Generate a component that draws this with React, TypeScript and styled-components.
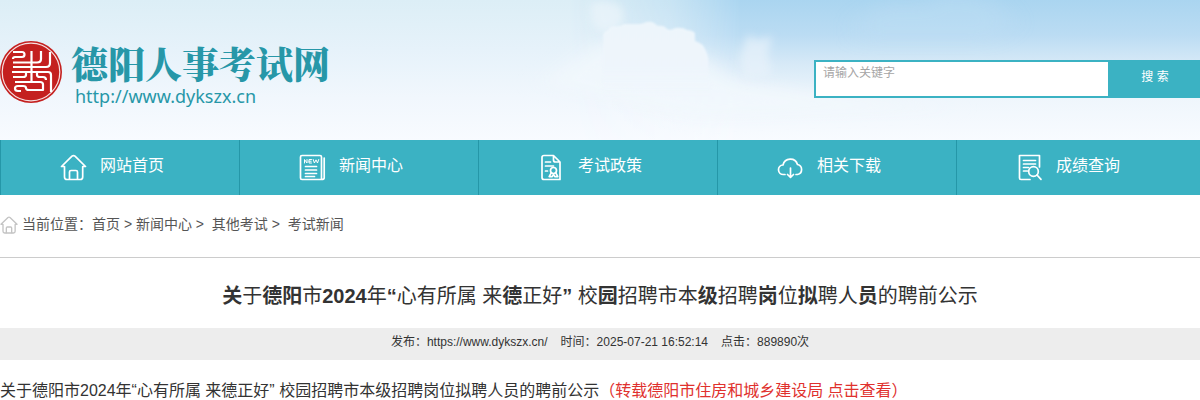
import React from 'react';
import styled, { createGlobalStyle } from 'styled-components';

const teal = '#3bb2c3';
const sans = '"Liberation Sans", "Noto Sans CJK SC", sans-serif';

const GlobalStyle = createGlobalStyle`
  * { box-sizing: border-box; }
  body { margin: 0; background: #fff; color: #333; font-family: ${sans}; }
  h1, p { margin: 0; padding: 0; font-weight: 400; }
  a { color: inherit; text-decoration: none; }
`;

const Header = styled.header`
  position: relative;
  display: flex;
  justify-content: space-between;
  align-items: flex-start;
  height: 140px;
  overflow: hidden;
  background: linear-gradient(#dceef6, #e6f2fa 35%, #f1f7fd 70%, #f8fbff);
`;

const Sky = styled.svg`
  position: absolute;
  top: 0;
  left: 0;
  width: 100%;
  height: 100%;
`;

const Brand = styled.a`
  position: relative;
  display: flex;
  gap: 8px;
  padding-top: 40px;
`;

const BrandText = styled.span`
  display: flex;
  flex-direction: column;
  color: #2797a8;
`;

const BrandName = styled.span`
  font: 900 37px/46px "Noto Serif CJK SC", "Noto Sans CJK SC", serif;
`;

const BrandUrl = styled.span`
  padding-left: 4px;
  font: 18px/20px "Noto Sans", sans-serif;
`;

const Search = styled.form`
  position: relative;
  display: flex;
  width: 386px;
  height: 38px;
  margin-top: 60px;
`;

const SearchInput = styled.input`
  flex: 1;
  min-width: 0;
  padding: 0 7px 12px;
  border: 2px solid ${teal};
  border-radius: 0;
  background: #fff;
  outline: 0;
  font: 12px/20px ${sans};
  &::placeholder { color: #a5a5a5; opacity: 1; }
`;

const SearchButton = styled.button`
  width: 90px;
  padding: 0 0 4px;
  border: 0;
  background: ${teal};
  color: #fff;
  font: 12px/20px ${sans};
`;

const Nav = styled.nav`
  display: grid;
  grid-template-columns: repeat(5, 1fr);
  padding-right: 5px;
  background: ${teal};
`;

const NavLink = styled.a`
  display: flex;
  align-items: center;
  gap: 13px;
  height: 55px;
  padding-left: 59px;
  border-left: 1px solid #2597a8;
  color: #fff;
  font-size: 16px;
  line-height: 24px;
`;

const NavLabel = styled.span`
  padding-bottom: 3px;
`;

const Icon = styled.svg`
  flex: none;
  fill: none;
  stroke: currentColor;
  stroke-linecap: round;
  stroke-linejoin: round;
`;

const Breadcrumb = styled.nav`
  display: flex;
  align-items: center;
  gap: 4px;
  height: 63px;
  padding-bottom: 2px;
  border-bottom: 1px solid #ccc;
  color: #555;
  font-size: 14px;
  line-height: 20px;
  white-space: pre;
  svg { color: #c4c4c4; }
`;

const Trail = styled.span`
  padding-bottom: 2px;
`;

const Title = styled.h1`
  padding: 23px 0 17px;
  text-align: center;
  font-size: 20px;
  line-height: 30px;
`;

const Meta = styled.p`
  display: flex;
  justify-content: center;
  gap: 13px;
  padding: 4px 0 8px;
  background: #ededed;
  font-size: 12px;
  line-height: 20px;
`;

const Body = styled.p`
  padding-top: 19px;
  font-size: 16px;
  line-height: 24px;
`;

const Source = styled.a`
  color: #e0312e;
`;

const HomeShape = () => (
  <>
    <path d="M4.500 12.500H1.500L12 2.200q1.500-1.200 3 0l10.500 10.300H22.700V23q0 2.500-2.500 2.500H7Q4.500 25.500 4.500 23V12.500Z" />
    <path d="M9.500 25v-7q0-1.500 1.500-1.500h5q1.500 0 1.500 1.500v7" />
  </>
);

const icons: Record<string, React.ReactNode> = {
  home: <HomeShape />,
  news: (
    <>
      <path d="M3 1.500h18q1.500 0 1.500 1.500v22.500H3Q1.500 25.500 1.500 24V3Q1.500 1.500 3 1.500ZM25.200 4v20q0 1.500-2.700 1.500" />
      <path strokeWidth="1" d="M5.500 9V5.500L8 9V5.500M12.500 5.500H10V9h2.500M10 7.200h2.200M14.200 5.500l1.200 3.500L17 5.800 18.500 9l1.200-3.500" />
      <path d="M6.500 12.500h11M6.500 16h11M6.500 19.500h11M6.500 22.500h9" />
    </>
  ),
  policy: (
    <>
      <path d="M22 25.500V8l-6.500-6.500H6Q4 1.500 4 3.500v20q0 2 2 2H22M15.500 2v4q0 2 2 2H22" />
      <path d="M7.500 8h5M7.500 12h8M7.500 17h2" />
      <circle cx="15.500" cy="16.500" r="3" />
      <path d="m13.200 18.800-2 3.800h3l1.300-2.200 1.300 2.200h3l-2-3.800" />
    </>
  ),
  download: (
    <>
      <path d="M8 20.500H6.500A4.700 4.700 0 0 1 6 11a7.500 7.500 0 0 1 14.500-.5A5.100 5.100 0 0 1 20.500 20.500H19" />
      <path d="M13.500 14v9M10.500 20.500l3 2.800 3-2.800" />
    </>
  ),
  results: (
    <>
      <path d="M14 25.500H5Q3.500 25.500 3.500 24V1.500h20V13M7.500 6.500h12M7.500 10h12M7.500 13.500h5M7.500 17h4" />
      <circle cx="17.500" cy="17.500" r="4.800" />
      <path d="m21 21 4 4.300" />
    </>
  ),
};

const navItems = [
  ['home', '网站首页'],
  ['news', '新闻中心'],
  ['policy', '考试政策'],
  ['download', '相关下载'],
  ['results', '成绩查询'],
];

const Seal = () => (
  <svg width="63" height="64" viewBox="0 0 63 64" aria-hidden="true">
    <circle cx="31" cy="32" r="31" fill="#c4201f" />
    <circle cx="31" cy="32" r="28.800" fill="none" stroke="#f6dfe0" strokeWidth="1.200" />
    <g fill="none" stroke="#fff" strokeWidth="2.200" strokeLinejoin="round">
      <path d="M13 12h9q2.500 0 2.500 2.500T22 17h-7q-2 0-2 2M31.500 11v31" />
      <path d="M13 22.500h24q4 0 4-3.500v-8M50 12v11q0 4-4 4H13" />
      <path d="M12 32h36q3 0 3 3v17" />
      <path d="M13 37h10q3 0 3-2v-3M37 32v3q0 2 3 2h3q3 0 3 3" />
      <path d="M15 42h25q3 0 3 2.500V50H29q-3 0-3-2t-3-2h-5q-3 0-3 2.500t3 2.500h3" />
    </g>
  </svg>
);

const SkyArt = () => (
  <Sky viewBox="0 0 1200 140" preserveAspectRatio="none" aria-hidden="true">
    <defs>
      <linearGradient id="blue" x1="0" y1="0" x2="0" y2="1">
        <stop offset="0" stopColor="#aad5f0" />
        <stop offset=".25" stopColor="#bbdcf3" />
        <stop offset=".45" stopColor="#d6e9f7" />
        <stop offset=".7" stopColor="#eff6fc" />
        <stop offset="1" stopColor="#f8fbff" />
      </linearGradient>
      <linearGradient id="edge" x1="0" y1="0" x2="1" y2="0">
        <stop offset="0" stopColor="#000" />
        <stop offset=".16" stopColor="#666" />
        <stop offset=".27" stopColor="#fff" />
      </linearGradient>
      <linearGradient id="puff" x1="0" y1="0" x2="0" y2="1">
        <stop offset="0" stopColor="#edf5fb" />
        <stop offset=".6" stopColor="#eef5fc" />
        <stop offset="1" stopColor="#f1f7fd" stopOpacity="0" />
      </linearGradient>
      <mask id="fade">
        <rect x="570" width="630" height="140" fill="url(#edge)" />
      </mask>
      <filter id="soft" x="-30%" y="-30%" width="160%" height="160%">
        <feGaussianBlur stdDeviation="12 7" />
      </filter>
      <filter id="wisp" x="-30%" y="-30%" width="160%" height="160%">
        <feGaussianBlur stdDeviation="4" />
      </filter>
      <filter id="crisp">
        <feGaussianBlur stdDeviation="0.8" />
      </filter>
    </defs>
    <rect x="570" width="630" height="140" fill="url(#blue)" mask="url(#fade)" />
    <g filter="url(#soft)">
      <path d="M540 85 600 40 700 55 735 80 820 95 960 108 700 118Z" fill="#f1f7fd" opacity=".8" />
      <path d="M860 20q25-25 60-12 15-18 48-12 35 0 42 30l-20 15H860Z" fill="#bfdff4" opacity=".4" />
    </g>
    <g filter="url(#wisp)">
      <path d="M590 4q12-6 26 0 10 4 7 16-4 12-18 13-12-2-14-14Z" fill="#eaf4fa" opacity=".8" />
      <path d="M748 34 756 40 772 36 768 54 772 76 744 80 739 58Z" fill="#e8f2fb" opacity=".7" />
    </g>
    <path
      d="M603 98V38q-1-6 5-8 2-4 6-4 5 1 10-2h13q6 0 9-2 5-1 8 1l4 3q6-1 9 3 4 2 8-1 8-1 12 2 5 0 8 3v8q8 2 11 10 3 6 2 15l4 32Z"
      fill="url(#puff)"
      filter="url(#crisp)"
    />
  </Sky>
);

export default function App() {
  return (
    <>
      <GlobalStyle />
      <Header>
        <SkyArt />
        <Brand href="#">
          <Seal />
          <BrandText>
            <BrandName>德阳人事考试网</BrandName>
            <BrandUrl>http://www.dykszx.cn</BrandUrl>
          </BrandText>
        </Brand>
        <Search>
          <SearchInput type="text" placeholder="请输入关键字" aria-label="请输入关键字" />
          <SearchButton type="button">搜 索</SearchButton>
        </Search>
      </Header>
      <Nav>
        {navItems.map(([icon, label]) => (
          <NavLink href="#" key={icon}>
            <Icon width="27" height="27" viewBox="0 0 27 27" strokeWidth="1.7" aria-hidden="true">
              {icons[icon]}
            </Icon>
            <NavLabel>{label}</NavLabel>
          </NavLink>
        ))}
      </Nav>
      <Breadcrumb>
        <Icon width="18" height="18" viewBox="0 0 27 27" strokeWidth="2" aria-hidden="true">
          <HomeShape />
        </Icon>
        <Trail>
          当前位置：<a href="#">首页</a>{' > '}<a href="#">新闻中心</a>{' >  '}
          <a href="#">其他考试</a>{' >  '}<a href="#">考试新闻</a>
        </Trail>
      </Breadcrumb>
      <main>
        <Title>
          <b>关</b>于<b>德阳</b>市<b>2024</b>年<b>“</b>心有所属 来<b>德</b>正好<b>”</b> 校<b>园</b>招聘市本<b>级</b>招聘<b>岗</b>位<b>拟</b>聘人<b>员</b>的聘前公示
        </Title>
        <Meta>
          <span>发布：https://www.dykszx.cn/</span>
          <span>时间：2025-07-21 16:52:14</span>
          <span>点击：889890次</span>
        </Meta>
        <Body>
          关于德阳市2024年“心有所属 来德正好” 校园招聘市本级招聘岗位拟聘人员的聘前公示
          <Source href="#">（转载德阳市住房和城乡建设局 点击查看）</Source>
        </Body>
      </main>
    </>
  );
}
